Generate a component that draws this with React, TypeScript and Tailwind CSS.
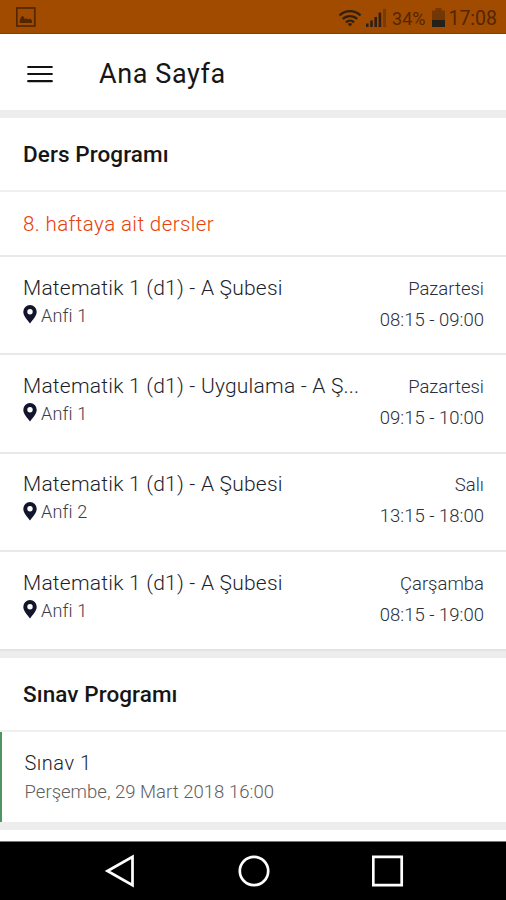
import clsx from 'clsx'

type Lesson = {
  name: string
  place: string
  day: string
  time: string
}

const lessons: Lesson[] = [
  { name: 'Matematik 1 (d1) - A Şubesi', place: 'Anfi 1', day: 'Pazartesi', time: '08:15 - 09:00' },
  { name: 'Matematik 1 (d1) - Uygulama - A Ş...', place: 'Anfi 1', day: 'Pazartesi', time: '09:15 - 10:00' },
  { name: 'Matematik 1 (d1) - A Şubesi', place: 'Anfi 2', day: 'Salı', time: '13:15 - 18:00' },
  { name: 'Matematik 1 (d1) - A Şubesi', place: 'Anfi 1', day: 'Çarşamba', time: '08:15 - 19:00' },
]

const StatusBar = () => (
  <div className="flex h-[34px] shrink-0 items-center border-b border-[#a82c10] bg-[#a04b00] pl-4 pr-[9px] text-[#542600]">
    <svg width="20" height="20" viewBox="0 0 20 20">
      <rect x=".8" y="1" width="18" height="18" fill="none" stroke="currentColor" strokeWidth="1.700" />
      <path d="M3.800 16v-3.500l2.200-3.500 1.500.500 1.500 3 1.500-1.500 1.500 1.500 2-1 2 2V16z" fill="currentColor" />
    </svg>
    <svg className="ml-auto mt-0.5" width="24" height="18" viewBox="0 0 24 18">
      <g fill="none" stroke="#302014" strokeWidth="2.300">
        <path d="M1.500 6.500a15 15 0 0 1 21 0" />
        <path d="M4.800 10a10.300 10.300 0 0 1 14.400 0" />
        <path d="M8 13.300a5.800 5.800 0 0 1 8 0" />
      </g>
      <path d="M9.800 15a3.200 3.200 0 0 1 4.400 0L12 17.500z" fill="#302014" />
    </svg>
    <svg className="ml-[4px] mt-0.5" width="21" height="20" viewBox="0 0 21 20">
      <path d="M0 15.500h2.600V19H0zM4.200 12.500h2.600V19H4.200zM8.400 9H11v10H8.400zM12.600 4.500h2.600V19h-2.600z" fill="#302014" />
      <path d="M17 1h3v18h-3z" fill="#7a3a04" />
    </svg>
    <span className="ml-[5px] mt-1 text-[18px] leading-none">34%</span>
    <svg className="ml-[7px] mt-0.5" width="13" height="20" viewBox="0 0 13 20">
      <path d="M3.500 0h6v2.500H13V12H0V2.500h3.500z" fill="#733704" />
      <path d="M0 12h13v7H0z" fill="#252018" />
    </svg>
    <span className="ml-[3px] mt-1 text-[19.500px] leading-none">17:08</span>
  </div>
)

const SectionTitle = ({ children }: { children: string }) => (
  <h2 className="flex h-[74px] shrink-0 items-center border-b-2 border-[#f0f0f0] pl-[23px] pt-0.5 text-[22.500px] font-medium tracking-[0.080px] text-[#161616]">
    {children}
  </h2>
)

const PinIcon = () => (
  <svg className="-mt-0.5" width="14" height="19" viewBox="0 0 14 19">
    <path
      d="M7 0a6.700 6.700 0 0 0-6.700 6.700C.300 11.200 4.600 14.800 7 18.600c2.400-3.800 6.700-7.400 6.700-11.900A6.700 6.700 0 0 0 7 0zm0 4a2.700 2.700 0 1 1 0 5.400A2.700 2.700 0 0 1 7 4z"
      fill="#12152b"
      fillRule="evenodd"
    />
  </svg>
)

const LessonRow = ({ lesson, last }: { lesson: Lesson; last: boolean }) => (
  <div
    className={clsx(
      'flex shrink-0 justify-between pl-[23px] pr-[22px]',
      last ? 'h-[97px]' : 'h-[98.300px] border-b-2 border-[#e9e9e9]'
    )}
  >
    <div className="whitespace-nowrap pt-[16.700px]">
      <div className="text-[21px] font-[350] leading-7 tracking-[0.220px] text-[#1c1e2c]">{lesson.name}</div>
      <div className="flex items-center gap-1 text-[18px] leading-7 font-[350] tracking-[0.150px] text-[#3a3c48]">
        <PinIcon />
        <span>{lesson.place}</span>
      </div>
    </div>
    <div className="whitespace-nowrap pt-[16.700px] text-right text-[18.500px] font-[350] leading-[31px] text-[#2c2e38]">
      <div>{lesson.day}</div>
      <div>{lesson.time}</div>
    </div>
  </div>
)

const NavBar = () => (
  <div className="flex h-[59px] shrink-0 items-center justify-center gap-[102px] border-t border-[#777] bg-black pl-px">
    <svg width="32" height="34" viewBox="0 0 32 34" fill="none" stroke="#fff" strokeWidth="2.700">
      <path d="M3.500 17L28.500 2.800v28.400z" />
    </svg>
    <svg width="32" height="32" viewBox="0 0 32 32" fill="none" stroke="#fff" strokeWidth="2.700">
      <circle cx="16" cy="16" r="14.200" />
    </svg>
    <svg width="32" height="32" viewBox="0 0 32 32" fill="none" stroke="#fff" strokeWidth="2.700">
      <path d="M1.300 1.800h28.400v28.400H1.300z" />
    </svg>
  </div>
)

export default function App() {
  return (
    <div className="flex h-[900px] w-[506px] flex-col overflow-hidden bg-white font-[Roboto,sans-serif]">
      <StatusBar />
      <header className="flex h-[76px] shrink-0 items-center pl-[27px]">
        <svg className="mt-[3px]" width="26" height="18" viewBox="0 0 26 18" stroke="#111" strokeWidth="2.200" strokeLinecap="round">
          <path d="M1.200 2h23.600M1.200 9h23.600M1.200 16.200h23.600" />
        </svg>
        <h1 className="ml-[46px] mt-1 text-[27px] leading-8 tracking-[0.600px] text-[#161616]">Ana Sayfa</h1>
      </header>

      <div className="h-2 shrink-0 bg-[#ededed]" />
      <SectionTitle>Ders Programı</SectionTitle>
      <div className="flex h-[65px] shrink-0 items-center border-b-2 border-[#e9e9e9] pl-[23px] pt-0.5 text-[20.500px] font-[350] tracking-[0.420px] text-[#e8400a]">
        8. haftaya ait dersler
      </div>
      {lessons.map((lesson, index) => (
        <LessonRow key={index} lesson={lesson} last={index === lessons.length - 1} />
      ))}

      <div className="h-[9px] shrink-0 border-t-2 border-[#e3e3e3] bg-[#ededed]" />
      <SectionTitle>Sınav Programı</SectionTitle>
      <div className="h-[90px] shrink-0 border-l-2 border-[#4d9660] pl-[22.500px] pt-[17px]">
        <div className="text-[20px] font-[350] leading-[29px] tracking-[0.500px] text-[#1c1e2c]">Sınav 1</div>
        <div className="text-[18.500px] font-[350] leading-[29px] tracking-[0.020px] text-[#606060]">
          Perşembe, 29 Mart 2018 16:00
        </div>
      </div>
      <div className="h-2 shrink-0 bg-[#ededed]" />
      <div className="flex-1" />
      <NavBar />
    </div>
  )
}
